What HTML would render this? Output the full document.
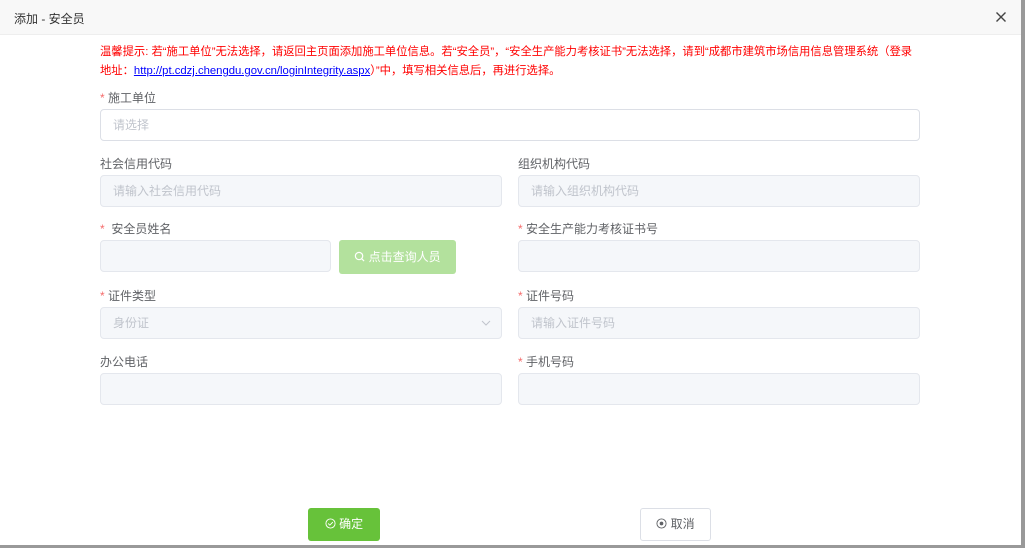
<!DOCTYPE html>
<html><head><meta charset="utf-8"><style>
*{box-sizing:border-box;margin:0;padding:0}
body{width:1025px;height:548px;background:#999;position:relative;overflow:hidden;font-family:"Liberation Sans","Noto Sans CJK SC",sans-serif;font-size:12px;color:#606266}
.dlg{position:absolute;left:0;top:0;width:1021px;height:545px;background:#fff}
.hd{position:absolute;left:0;top:0;width:1021px;height:35px;background:#f8f8f8;border-bottom:1px solid #eee}
.hd span{position:absolute;left:14px;top:10px;font-size:12px;color:#333}
.x{position:absolute;left:996px;top:12px}
.tip{position:absolute;left:100px;top:43px;width:822px;color:#f00;font-size:11.3px;line-height:19px}
.tip a{color:#00f;text-decoration:underline}
.lb{position:absolute;font-size:12px;color:#606266}
.lb i{color:#f56c6c;font-style:normal}
.in{position:absolute;height:32px;border:1px solid #e4e7ed;border-radius:4px;background:#f5f7fa;color:#c0c4cc;padding-left:12px;line-height:30px;font-size:12px}
.w{background:#fff;border-color:#dcdfe6}
.btn{position:absolute;border-radius:3px;text-align:center;font-size:12px}
</style></head><body>
<div class="dlg">
<div class="hd"><span>添加 - 安全员</span>
<svg class="x" width="10" height="10" viewBox="0 0 10 10"><path d="M0.5 0.5L9.5 9.5M9.5 0.5L0.5 9.5" stroke="#444" stroke-width="1.4"/></svg></div>
<div class="tip">温馨提示: 若“施工单位”无法选择，请返回主页面添加施工单位信息。若“安全员”，“安全生产能力考核证书”无法选择，请到“成都市建筑市场信用信息管理系统（登录地址：<a>http://pt.cdzj.chengdu.gov.cn/loginIntegrity.aspx</a>）”中，填写相关信息后，再进行选择。</div>
<div class="lb" style="left:100px;top:89px"><i>*</i> 施工单位</div>
<div class="in w" style="left:100px;top:109px;width:820px">请选择</div>
<div class="lb" style="left:100px;top:155px">社会信用代码</div>
<div class="in" style="left:100px;top:175px;width:402px">请输入社会信用代码</div>
<div class="lb" style="left:518px;top:155px">组织机构代码</div>
<div class="in" style="left:518px;top:175px;width:402px">请输入组织机构代码</div>
<div class="lb" style="left:100px;top:220px"><i>*</i>&nbsp; 安全员姓名</div>
<div class="in" style="left:100px;top:240px;width:231px"></div>
<div class="btn" style="left:339px;top:240px;width:117px;height:34px;background:#b3e19d;color:#fff;line-height:34px">
<svg width="11" height="11" viewBox="0 0 12 12" style="vertical-align:-1px"><circle cx="5.5" cy="5.5" r="4" fill="none" stroke="#fff" stroke-width="1.3"/><path d="M8.5 8.5L11 11" stroke="#fff" stroke-width="1.3"/></svg> 点击查询人员</div>
<div class="lb" style="left:518px;top:220px"><i>*</i> 安全生产能力考核证书号</div>
<div class="in" style="left:518px;top:240px;width:402px"></div>
<div class="lb" style="left:100px;top:287px"><i>*</i> 证件类型</div>
<div class="in" style="left:100px;top:307px;width:402px">身份证<svg style="position:absolute;right:10px;top:12px" width="10" height="6" viewBox="0 0 10 6"><path d="M1 1L5 5L9 1" fill="none" stroke="#c0c4cc"/></svg></div>
<div class="lb" style="left:518px;top:287px"><i>*</i> 证件号码</div>
<div class="in" style="left:518px;top:307px;width:402px">请输入证件号码</div>
<div class="lb" style="left:100px;top:353px">办公电话</div>
<div class="in" style="left:100px;top:373px;width:402px"></div>
<div class="lb" style="left:518px;top:353px"><i>*</i> 手机号码</div>
<div class="in" style="left:518px;top:373px;width:402px"></div>
<div class="btn" style="left:308px;top:508px;width:72px;height:33px;background:#67c23a;color:#fff;line-height:33px">
<svg width="11" height="11" viewBox="0 0 12 12" style="vertical-align:-1px"><circle cx="6" cy="6" r="5" fill="none" stroke="#fff"/><path d="M3.5 6L5.3 7.8L8.5 4.5" fill="none" stroke="#fff"/></svg> 确定</div>
<div class="btn" style="left:640px;top:508px;width:71px;height:33px;border:1px solid #dcdfe6;color:#606266;line-height:31px;background:#fff">
<svg width="11" height="11" viewBox="0 0 12 12" style="vertical-align:-1px"><circle cx="6" cy="6" r="5" fill="none" stroke="#606266"/><circle cx="6" cy="6" r="2" fill="#606266"/></svg> 取消</div>
</div>
</body></html>
